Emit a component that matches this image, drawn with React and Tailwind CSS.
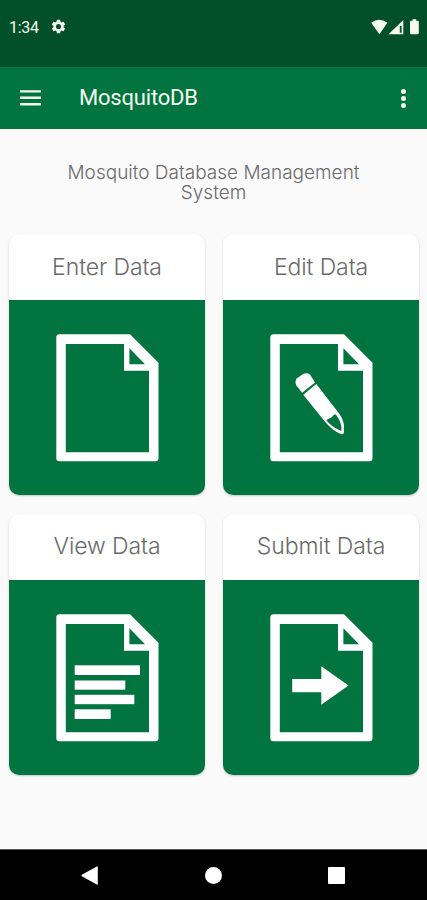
const cards = [
  { title: "Enter Data", icon: null },
  { title: "Edit Data", icon: <Pencil /> },
  { title: "View Data", icon: <Lines /> },
  { title: "Submit Data", icon: <Arrow /> },
];

function Pencil() {
  return (
    <>
      <path
        fill="#fff"
        d="M79.1 92.8 73.2 85.2Q71.4 81 74 78.2L80.5 73.8Q84.3 72.2 87 74.6L92 82.4Z"
      />
      <path
        fill="#fff"
        fillRule="evenodd"
        d="M80.3 94.7 93.3 84 115.5 112.8Q120.4 119 121 126V132.3Q120.8 134.5 118.3 134.2 110 131 102 121.7ZM103.4 120.5Q109.5 127.5 118.4 131 119.4 123 112.6 114.2 110.5 114.5 109.3 116.4 108.2 118 106.2 118.4 104.5 118.8 103.4 120.5Z"
      />
    </>
  );
}

function Lines() {
  return (
    <g fill="#fff">
      <rect x="65.7" y="85.3" width="65.3" height="9.7" />
      <rect x="65.7" y="100.5" width="50.6" height="9.2" />
      <rect x="65.7" y="114.8" width="59.6" height="9.4" />
      <rect x="65.7" y="129.3" width="36" height="9.7" />
    </g>
  );
}

function Arrow() {
  return (
    <path fill="#fff" d="M69.2 99H98.3V86.3L125.5 105.5 98.3 124.7V112.2H69.2Z" />
  );
}

function Card({ title, children }) {
  return (
    <div className="flex h-[261px] flex-col overflow-hidden rounded-[10px] bg-white shadow-[0_1px_2px_rgba(0,0,0,0.22)]">
      <h2 className="flex h-[66px] items-center justify-center text-[23px] font-light tracking-[-0.1px] text-[#6a6a6a]">
        {title}
      </h2>
      <svg viewBox="0 0 196 195" className="h-[195px] w-[196px] bg-[#01743f]">
        {/* sheet of paper with a folded corner */}
        <path
          fill="#fff"
          fillRule="evenodd"
          d="M50.3 34.3H121L149.5 62.7V158.3Q149.5 161.3 146.5 161.3H50.3Q47.3 161.3 47.3 158.3V37.3Q47.3 34.3 50.3 34.3ZM56.8 44V152.3H140V70.7H115V44ZM120.4 48.3V64.3H136Z"
        />
        {children}
      </svg>
    </div>
  );
}

function StatusBar() {
  return (
    <div className="flex h-[67px] items-start bg-[#01502a] pt-[18px] pr-[7px] pl-[9px] text-[#f6fbf0]">
      <span className="w-[41px] text-base leading-[20px] tracking-[-0.3px]">1:34</span>
      <svg viewBox="0 0 24 24" className="size-[17px]" fill="currentColor">
        <path d="M19.14 12.94c.04-.3.06-.61.06-.94 0-.32-.02-.64-.07-.94l2.03-1.58c.18-.14.23-.41.12-.61l-1.92-3.32c-.12-.22-.37-.29-.59-.22l-2.39.96c-.5-.38-1.03-.7-1.62-.94l-.36-2.54c-.04-.24-.24-.41-.48-.41h-3.84c-.24 0-.43.17-.47.41l-.36 2.54c-.59.24-1.13.57-1.62.94l-2.39-.96c-.22-.08-.47 0-.59.22L2.74 8.87c-.12.21-.08.47.12.61l2.03 1.58c-.05.3-.09.63-.09.94s.02.64.07.94l-2.03 1.58c-.18.14-.23.41-.12.61l1.92 3.32c.12.22.37.29.59.22l2.39-.96c.5.38 1.03.7 1.62.94l.36 2.54c.05.24.24.41.48.41h3.84c.24 0 .44-.17.47-.41l.36-2.54c.59-.24 1.13-.56 1.62-.94l2.39.96c.22.08.47 0 .59-.22l1.92-3.32c.12-.22.07-.47-.12-.61l-2.01-1.58zM12 15.6A3.6 3.6 0 1 1 12 8.4a3.6 3.6 0 0 1 0 7.2z" />
      </svg>
      <svg viewBox="0 0 50 17" className="ml-auto h-[17px] w-[50px]" fill="currentColor">
        <path d="M1.2 4.8Q9.2-1.4 17.4 4.8L9.4 16.3Z" />
        <path fillRule="evenodd" d="M33.3 2V16.3H18.5ZM29.8 8V14.7H31.6V8Z" />
        <path d="M42.6 1.2H46.2V2.7H47.6Q48.8 2.7 48.8 4V15Q48.8 16.2 47.6 16.2H41.2Q40 16.2 40 15V4Q40 2.7 41.2 2.7H42.6Z" />
      </svg>
    </div>
  );
}

function AppBar() {
  return (
    <div className="flex h-[61.5px] items-center bg-[#01743f] pt-[1px] pr-[21px] pl-[20px] text-[#f6fbf0]">
      <svg viewBox="0 0 21 16" className="mr-[38px] h-[16px] w-[21px]" fill="currentColor">
        <path d="M0 .2H21V2.6H0ZM0 6.6H21V9H0ZM0 13H21V15.4H0Z" />
      </svg>
      <h1 className="text-[22px] leading-none tracking-[-0.2px]">MosquitoDB</h1>
      <div className="ml-auto flex flex-col gap-[2px]">
        <span className="size-[5px] rounded-full bg-current" />
        <span className="size-[5px] rounded-full bg-current" />
        <span className="size-[5px] rounded-full bg-current" />
      </div>
    </div>
  );
}

function NavBar() {
  return (
    <div className="flex h-[51px] items-center justify-between border-t border-[#555] bg-black pr-[82px] pl-[81px]">
      <svg viewBox="0 0 17 19" className="h-[19px] w-[17px]" fill="#fff">
        <path d="M16.8.8V18.2Q16.5 19 15.8 18.6L.8 10.2Q0 9.5.8 8.8L15.8.4Q16.5 0 16.8.8Z" />
      </svg>
      <span className="size-[17px] rounded-full bg-white" />
      <span className="size-[17px] rounded-[1px] bg-white" />
    </div>
  );
}

export default function App() {
  return (
    <div className="flex h-[900px] w-[427px] flex-col overflow-hidden bg-[#fafafa] font-['Roboto',sans-serif]">
      <StatusBar />
      <AppBar />
      <main className="flex-1 px-[9px] font-['Inter',sans-serif]">
        <p className="mx-auto mt-[34.5px] w-[320px] text-center text-[19px] leading-[20px] font-light text-[#6a6a6a]">
          Mosquito Database Management System
        </p>
        <div className="mt-[31.4px] grid grid-cols-[196px_196px] gap-x-[18px] gap-y-[18.3px]">
          {cards.map((card) => (
            <Card key={card.title} title={card.title}>
              {card.icon}
            </Card>
          ))}
        </div>
      </main>
      <NavBar />
    </div>
  );
}
